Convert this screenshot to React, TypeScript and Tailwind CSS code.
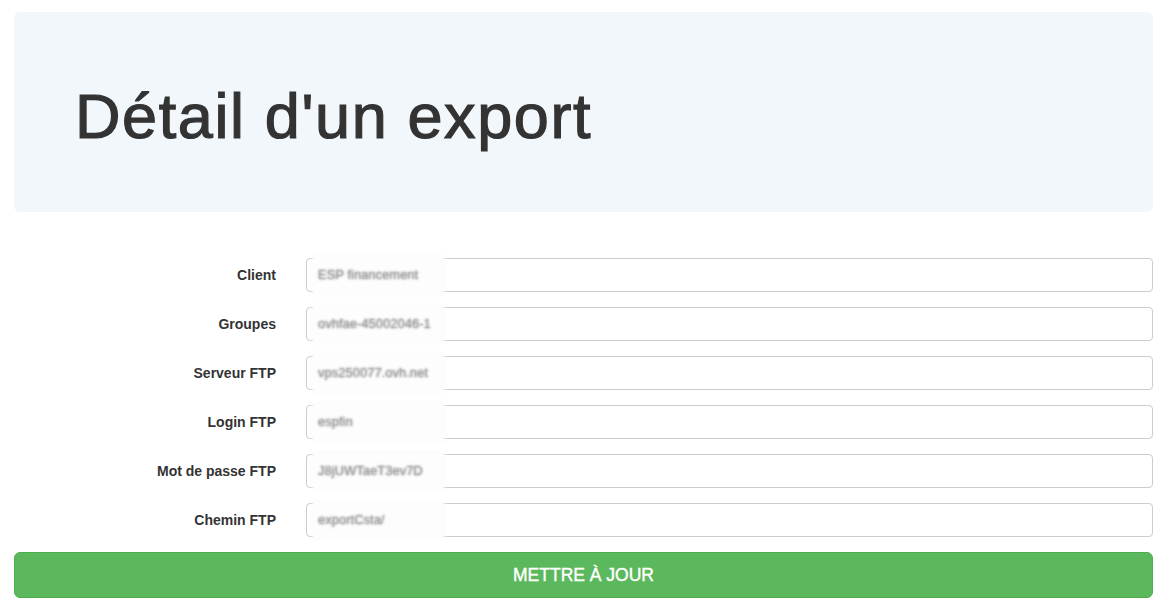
import React from "react";

const rows = [
  { label: "Client", value: "ESP financement" },
  { label: "Groupes", value: "ovhfae-45002046-1" },
  { label: "Serveur FTP", value: "vps250077.ovh.net" },
  { label: "Login FTP", value: "espfin" },
  { label: "Mot de passe FTP", value: "J8jUWTaeT3ev7D" },
  { label: "Chemin FTP", value: "exportCsta/" },
];

export default function App() {
  return (
    <div
      className="min-h-[608px] bg-white px-[14px] pt-[12px] text-[#333]"
      style={{ fontFamily: '"Liberation Sans", Arial, Helvetica, sans-serif' }}
    >
      <div className="h-[200px] rounded-[6px] bg-[#f2f7fb] pl-[61px] flex items-center">
        <h1 className="text-[63px] leading-none font-normal text-[#333] tracking-[1.6px] mt-[8px] [-webkit-text-stroke:1.2px_#333]">
          Détail d'un export
        </h1>
      </div>
      <form className="mt-[46px] flex flex-col gap-[15px]">
        {rows.map((r) => (
          <div key={r.label} className="flex items-center">
            <label className="w-[262px] text-right text-[14px] font-bold text-[#333]">
              {r.label}
            </label>
            <div className="relative ml-[30px] flex-1 h-[34px] rounded-[4px] border border-[#ccc] bg-white">
              <div className="absolute left-[7px] top-[-2px] bottom-[-2px] w-[129px] bg-[#fdfdfd] [box-shadow:0_0_3px_2px_rgba(252,252,252,0.9)]" />
              <div className="relative h-full flex items-center pl-[11px]">
                <span className="text-[13px] text-transparent [text-shadow:0_0_3px_#999,0_0_2px_#aaa] select-none">
                  {r.value}
                </span>
              </div>
            </div>
          </div>
        ))}
        <button
          type="button"
          className="h-[46px] w-full rounded-[6px] border border-[#4cae4c] bg-[#5cb85c] text-white text-[17.5px] flex items-center justify-center [-webkit-text-stroke:0.4px_#fff]"
        >
          METTRE À JOUR
        </button>
      </form>
    </div>
  );
}
